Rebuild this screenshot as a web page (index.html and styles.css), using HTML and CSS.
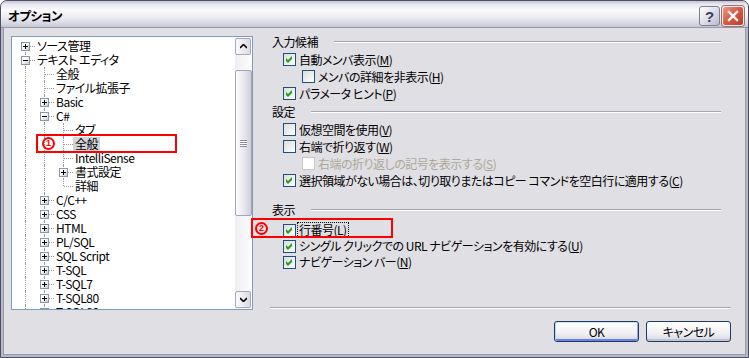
FILE: index.html
```html
<!DOCTYPE html>
<html lang="ja">

<head>
    <meta charset="UTF-8">
    <title>オプション</title>
    <link rel="stylesheet" href="styles.css">
</head>

<body>

    <div class="window">
        <div class="titlebar">
            <span class="title">オプション</span>
            <div class="caption-buttons">
                <span class="cap help">?</span>
                <span class="cap close">
                    <svg width="12" height="12" viewBox="0 0 12 12"><path d="M2 2 L10 10 M10 2 L2 10" stroke="#fff" stroke-width="2.4" stroke-linecap="square" /></svg>
                </span>
            </div>
        </div>

        <div class="client">
            <div class="body">
                <div class="tree">
                    <div class="tree-items">
                        <div class="row"><i class="g f"><b class="exp plus"></b></i><span class="label">ソース管理</span></div>
                        <div class="row"><i class="g t"><b class="exp"></b></i><span class="label">テキスト エディタ</span></div>
                        <div class="row"><i class="g v"></i><i class="g t"></i><span class="label">全般</span></div>
                        <div class="row"><i class="g v"></i><i class="g t"></i><span class="label">ファイル拡張子</span></div>
                        <div class="row"><i class="g v"></i><i class="g t"><b class="exp plus"></b></i><span class="label">Basic</span></div>
                        <div class="row"><i class="g v"></i><i class="g t"><b class="exp"></b></i><span class="label">C#</span></div>
                        <div class="row"><i class="g v"></i><i class="g v"></i><i class="g t"></i><span class="label">タブ</span></div>
                        <div class="row"><i class="g v"></i><i class="g v"></i><i class="g t"></i><span class="label sel">全般</span></div>
                        <div class="row"><i class="g v"></i><i class="g v"></i><i class="g t"></i><span class="label">IntelliSense</span></div>
                        <div class="row"><i class="g v"></i><i class="g v"></i><i class="g t"><b class="exp plus"></b></i><span class="label">書式設定</span></div>
                        <div class="row"><i class="g v"></i><i class="g v"></i><i class="g l"></i><span class="label">詳細</span></div>
                        <div class="row"><i class="g v"></i><i class="g t"><b class="exp plus"></b></i><span class="label">C/C++</span></div>
                        <div class="row"><i class="g v"></i><i class="g t"><b class="exp plus"></b></i><span class="label">CSS</span></div>
                        <div class="row"><i class="g v"></i><i class="g t"><b class="exp plus"></b></i><span class="label">HTML</span></div>
                        <div class="row"><i class="g v"></i><i class="g t"><b class="exp plus"></b></i><span class="label">PL/SQL</span></div>
                        <div class="row"><i class="g v"></i><i class="g t"><b class="exp plus"></b></i><span class="label">SQL Script</span></div>
                        <div class="row"><i class="g v"></i><i class="g t"><b class="exp plus"></b></i><span class="label">T-SQL</span></div>
                        <div class="row"><i class="g v"></i><i class="g t"><b class="exp plus"></b></i><span class="label">T-SQL7</span></div>
                        <div class="row"><i class="g v"></i><i class="g t"><b class="exp plus"></b></i><span class="label">T-SQL80</span></div>
                        <div class="row"><i class="g v"></i><i class="g t"><b class="exp plus"></b></i><span class="label">T-SQL90</span></div>
                    </div>

                    <div class="scrollbar">
                        <span class="sb-btn">
                            <svg width="7" height="5" viewBox="0 0 7 5"><path d="M0 4 L3.5 0.5 L7 4" fill="none" stroke="#000" stroke-width="1.6" /></svg>
                        </span>
                        <span class="sb-thumb"><span class="grip"></span></span>
                        <span class="sb-btn down">
                            <svg width="7" height="5" viewBox="0 0 7 5"><path d="M0 1 L3.5 4.5 L7 1" fill="none" stroke="#000" stroke-width="1.6" /></svg>
                        </span>
                    </div>
                </div>

                <div class="panel">
                    <div class="group-title"><span>入力候補</span></div>
                    <div class="check"><span class="box"><svg width="11" height="11" viewBox="0 0 11 11"><path d="M2 4 L4 6 L8 2 L8 5 L4 9 L2 7 Z" fill="#21a121" /></svg></span><span>自動メンバ表示(<u>M</u>)</span></div>
                    <div class="check sub"><span class="box"></span><span>メンバの詳細を非表示(<u>H</u>)</span></div>
                    <div class="check"><span class="box"><svg width="11" height="11" viewBox="0 0 11 11"><path d="M2 4 L4 6 L8 2 L8 5 L4 9 L2 7 Z" fill="#21a121" /></svg></span><span>パラメータ ヒント(<u>P</u>)</span></div>

                    <div class="group-title"><span>設定</span></div>
                    <div class="check"><span class="box"></span><span>仮想空間を使用(<u>V</u>)</span></div>
                    <div class="check"><span class="box"></span><span>右端で折り返す(<u>W</u>)</span></div>
                    <div class="check sub disabled"><span class="box"></span><span>右端の折り返しの記号を表示する(<u>S</u>)</span></div>
                    <div class="check"><span class="box"><svg width="11" height="11" viewBox="0 0 11 11"><path d="M2 4 L4 6 L8 2 L8 5 L4 9 L2 7 Z" fill="#21a121" /></svg></span><span>選択領域がない場合は、切り取りまたはコピー コマンドを空白行に適用する(<u>C</u>)</span></div>

                    <div class="group-title last"><span>表示</span></div>
                    <div class="compact">
                        <div class="check"><span class="box"><svg width="11" height="11" viewBox="0 0 11 11"><path d="M2 4 L4 6 L8 2 L8 5 L4 9 L2 7 Z" fill="#21a121" /></svg></span><span class="focus">行番号(<u>L</u>)</span></div>
                        <div class="check"><span class="box"><svg width="11" height="11" viewBox="0 0 11 11"><path d="M2 4 L4 6 L8 2 L8 5 L4 9 L2 7 Z" fill="#21a121" /></svg></span><span>シングル クリックでの URL ナビゲーションを有効にする(<u>U</u>)</span></div>
                        <div class="check"><span class="box"><svg width="11" height="11" viewBox="0 0 11 11"><path d="M2 4 L4 6 L8 2 L8 5 L4 9 L2 7 Z" fill="#21a121" /></svg></span><span>ナビゲーション バー(<u>N</u>)</span></div>
                    </div>

                    <div class="sep"></div>
                </div>
            </div>

            <div class="buttons">
                <button class="btn default">OK</button>
                <button class="btn">キャンセル</button>
            </div>
        </div>

        <!-- 注記 -->
        <div class="mark mark1"><span class="num">1</span></div>
        <div class="mark mark2"><span class="num">2</span></div>
    </div>

</body>

</html>
```

FILE: styles.css
```css
* {
    box-sizing: border-box;
}

body {
    margin: 0;
    background: #fff;
    color: #000;
    font-family: "Noto Sans CJK JP", "Liberation Sans", sans-serif;
    font-size: 12px;
    letter-spacing: -0.5px;
    font-feature-settings: "palt";
}

.window {
    position: relative;
    width: 749px;
    height: 358px;
    border: 1px solid #4e4e62;
    border-radius: 7px 7px 0 0;
    background: #b8b7ca;
    display: flex;
    flex-direction: column;
    overflow: hidden;
}

/* barra de título */
.titlebar {
    height: 27px;
    flex: none;
    display: flex;
    align-items: center;
    justify-content: space-between;
    padding: 4px 4px 0 7px;
    border-bottom: 1px solid #8c8ca0;
    background: linear-gradient(to bottom, #c2c1d4 0, #e6e6ee 3px, #fbfbfd 9px, #ececf2 16px, #d9d9e3 22px, #c6c6d4 26px);
}

.title {
    font-weight: bold;
    font-size: 12.5px;
    line-height: 16px;
}

.caption-buttons {
    display: flex;
    gap: 2px;
}

.cap {
    width: 21px;
    height: 20px;
    border-radius: 3px;
    display: flex;
    align-items: center;
    justify-content: center;
}

.help {
    border: 1px solid #7d7d93;
    background: linear-gradient(135deg, #ffffff, #dcdce6 55%, #b9b9cb);
    color: #3c3c5a;
    font-family: "Liberation Sans", sans-serif;
    font-weight: bold;
    font-size: 15px;
    letter-spacing: 0;
}

.close {
    width: 22px;
    border: 1px solid #f4f4f8;
    background: linear-gradient(135deg, #ef9c86, #dd5c43 45%, #bd3a26);
    box-shadow: 0 0 0 1px #a16f6a;
}

/* área do cliente */
.client {
    flex: 1;
    margin: 0 3px 3px;
    padding: 8px 14px 0 7px;
    background: #e0dfe3;
    box-shadow: 0 0 0 1px #9898ac;
    display: flex;
    flex-direction: column;
}

.body {
    display: flex;
    height: 274px;
}

/* árvore */
.tree {
    width: 242px;
    border: 1px solid #7f9db9;
    background: #fff;
    display: flex;
}

.tree-items {
    flex: 1;
    overflow: hidden;
    padding: 2px 0 0 4px;
}

.row {
    display: flex;
    height: 14px;
    line-height: 14px;
    white-space: nowrap;
}

.g {
    position: relative;
    width: 19px;
    height: 14px;
    flex: none;
}

.g::before,
.g::after {
    content: "";
    position: absolute;
}

.g.v::before,
.g.t::before {
    left: 9px;
    top: 0;
    bottom: 0;
    border-left: 1px dotted #999;
}

.g.f::before {
    left: 9px;
    top: 7px;
    bottom: 0;
    border-left: 1px dotted #999;
}

.g.l::before {
    left: 9px;
    top: 0;
    height: 7px;
    border-left: 1px dotted #999;
}

.g.t::after,
.g.f::after,
.g.l::after {
    left: 10px;
    top: 7px;
    width: 9px;
    border-top: 1px dotted #999;
}

.exp {
    position: absolute;
    left: 5px;
    top: 3px;
    width: 9px;
    height: 9px;
    z-index: 1;
    border: 1px solid #8a97aa;
    background: linear-gradient(135deg, #ffffff 35%, #c9c9d2);
}

.exp::before,
.exp::after {
    content: "";
    position: absolute;
    background: #000;
}

.exp::before {
    left: 1px;
    top: 3px;
    width: 5px;
    height: 1px;
}

.exp.plus::after {
    left: 3px;
    top: 1px;
    width: 1px;
    height: 5px;
}

.label {
    padding: 0 2px;
}

.label.sel {
    background: #d4d3da;
}

/* barra de rolagem */
.scrollbar {
    width: 17px;
    flex: none;
    padding: 1px 0;
    display: flex;
    flex-direction: column;
    background: linear-gradient(to right, #efeff3, #fdfdfd);
}

.sb-btn {
    height: 17px;
    margin-right: 1px;
    border: 1px solid #a9a8ba;
    border-radius: 2px;
    background: linear-gradient(to right, #fcfcfd, #dadae3);
    display: flex;
    align-items: center;
    justify-content: center;
}

.sb-btn.down {
    margin-top: auto;
}

.sb-thumb {
    height: 146px;
    margin-top: 15px;
    border: 1px solid #a4a3b6;
    border-radius: 2px;
    background: linear-gradient(to right, #fdfdfe, #e4e4eb 60%, #cfcfda);
    display: flex;
    align-items: center;
    justify-content: center;
}

.grip {
    width: 7px;
    height: 7px;
    background: repeating-linear-gradient(to bottom, #8e8ea2 0, #8e8ea2 1px, #fff 1px, #fff 2px);
}

/* painel de opções */
.panel {
    flex: 1;
    margin-left: 17px;
    display: flex;
    flex-direction: column;
}

.group-title {
    display: flex;
    align-items: center;
    height: 12px;
    line-height: 12px;
    padding-left: 2px;
    margin: 4px 10px 3px 0;
}

.group-title:first-child {
    margin-top: 0;
}

.group-title.last {
    margin-top: 15px;
    margin-bottom: 6px;
}

.group-title::after {
    content: "";
    flex: 1;
    margin-left: 16px;
    border-top: 1px solid #a5a5b0;
    border-bottom: 1px solid #fff;
}

.check {
    display: flex;
    align-items: center;
    height: 17px;
    padding-left: 13px;
    white-space: nowrap;
    line-height: 14px;
}

.compact .check {
    height: 16px;
}

.check.sub {
    padding-left: 32px;
}

.box {
    width: 13px;
    height: 13px;
    flex: none;
    margin-right: 3px;
    border: 1px solid #1c5180;
    background: linear-gradient(135deg, #dcdcd7, #ffffff);
    display: flex;
}

.disabled {
    color: #aca899;
}

.disabled .box {
    border-color: #cac8bb;
    background: #fff;
}

.focus {
    outline: 1px dotted #000;
    padding: 0 1px;
    margin-left: -1px;
}

.sep {
    margin-top: auto;
    margin-bottom: 1px;
    border-top: 1px solid #a5a5b0;
    border-bottom: 1px solid #fff;
}

/* botões */
.buttons {
    display: flex;
    justify-content: flex-end;
    gap: 7px;
    margin-top: 11px;
}

.btn {
    width: 85px;
    height: 21px;
    padding: 0;
    border: 1px solid #1f3c5e;
    border-radius: 3px;
    background: linear-gradient(to bottom, #ffffff, #f0f0f4 60%, #d6d5e1);
    box-shadow: inset 0 -2px 0 #c4c3d4;
    font-family: inherit;
    font-size: 12px;
    letter-spacing: -0.5px;
    font-feature-settings: "palt";
    color: #000;
}

.btn.default {
    box-shadow: inset 0 1px 0 #cee7ff, inset 1px 0 0 #bcd4f6, inset -1px 0 0 #89adf4, inset 0 -2px 0 #6982ee;
}

/* marcações vermelhas */
.mark {
    position: absolute;
    border: 2px solid #f00;
    display: flex;
    align-items: center;
}

.mark .num {
    width: 13px;
    height: 13px;
    border: 2px solid #f00;
    border-radius: 50%;
    display: flex;
    align-items: center;
    justify-content: center;
    color: #f00;
    font-family: "Liberation Sans", sans-serif;
    font-weight: bold;
    font-size: 9px;
    line-height: 9px;
    letter-spacing: 0;
}

.mark1 {
    left: 35px;
    top: 133px;
    width: 141px;
    height: 19px;
    padding-left: 4px;
}

.mark2 {
    left: 250px;
    top: 217px;
    width: 142px;
    height: 20px;
    padding-left: 2px;
}
```
